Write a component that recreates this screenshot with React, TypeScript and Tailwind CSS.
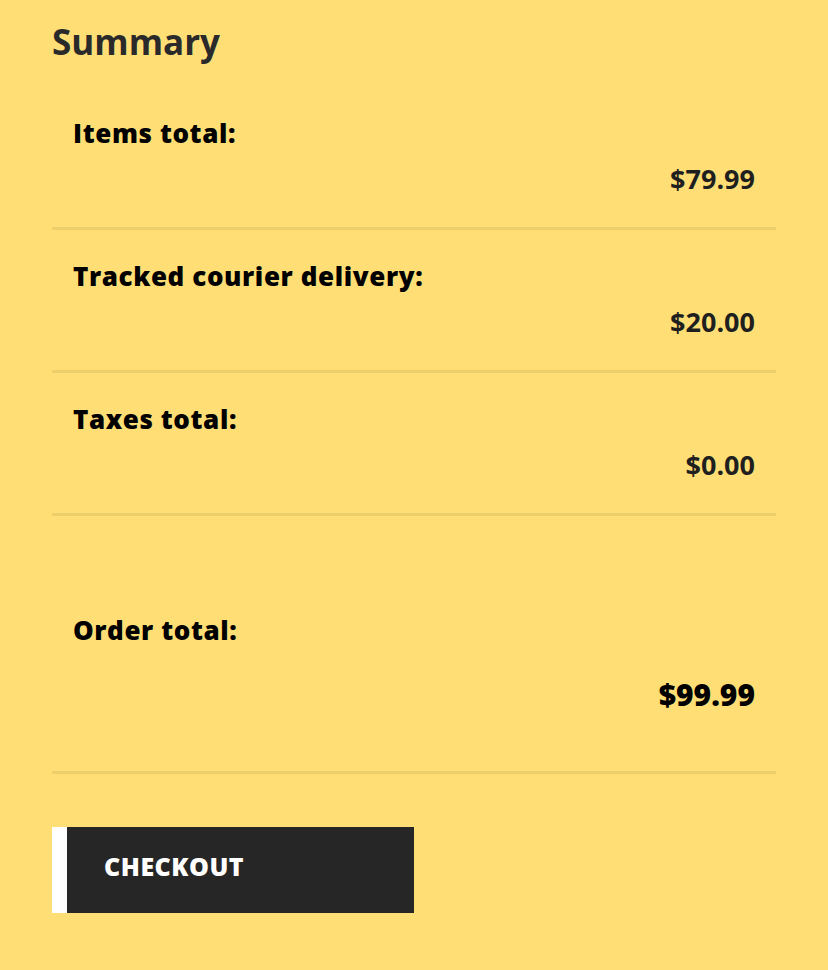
import React from "react";

type Row = { label: string; value: string };

const rows: Row[] = [
  { label: "Items total:", value: "$79.99" },
  { label: "Tracked courier delivery:", value: "$20.00" },
  { label: "Taxes total:", value: "$0.00" },
];

const App: React.FC = () => {
  return (
    <div
      className="min-h-[970px] w-full bg-[#ffdf75] px-[52px] pt-[22px]"
      style={{ fontFamily: '"Open Sans", "Noto Sans", sans-serif' }}
    >
      <div className="w-[724px]">
        {/* Heading */}
        <h1 className="mb-[25px] text-[35px] font-bold leading-[40px] text-[#2a2a2a]">
          Summary
        </h1>

        {/* Line items */}
        {rows.map((row) => (
          <div
            key={row.label}
            className="border-b-[3px] border-[#eccf6b] px-[21px] pt-[31px] pb-[33px]"
          >
            <p className="text-[26px] font-extrabold leading-[30px] tracking-[0.6px] text-black">
              {row.label}
            </p>
            <p className="mt-[16px] text-right text-[27px] font-bold leading-[30px] text-[#1f1f1f]">
              {row.value}
            </p>
          </div>
        ))}

        {/* Order total */}
        <div className="border-b-[3px] border-[#eccf6b] px-[21px] pt-[99px] pb-[59px]">
          <p className="text-[26px] font-extrabold leading-[30px] tracking-[0.6px] text-black">
            Order total:
          </p>
          <p className="mt-[33px] text-right text-[30px] font-extrabold leading-[34px] text-black">
            $99.99
          </p>
        </div>

        {/* Checkout */}
        <button className="mt-[53px] flex h-[86px] w-[362px] items-center border-l-[15px] border-white bg-[#262626] pb-[6px] pl-[37px] text-[25px] font-extrabold tracking-[0.5px] text-white">
          CHECKOUT
        </button>
      </div>
    </div>
  );
};

export default App;
